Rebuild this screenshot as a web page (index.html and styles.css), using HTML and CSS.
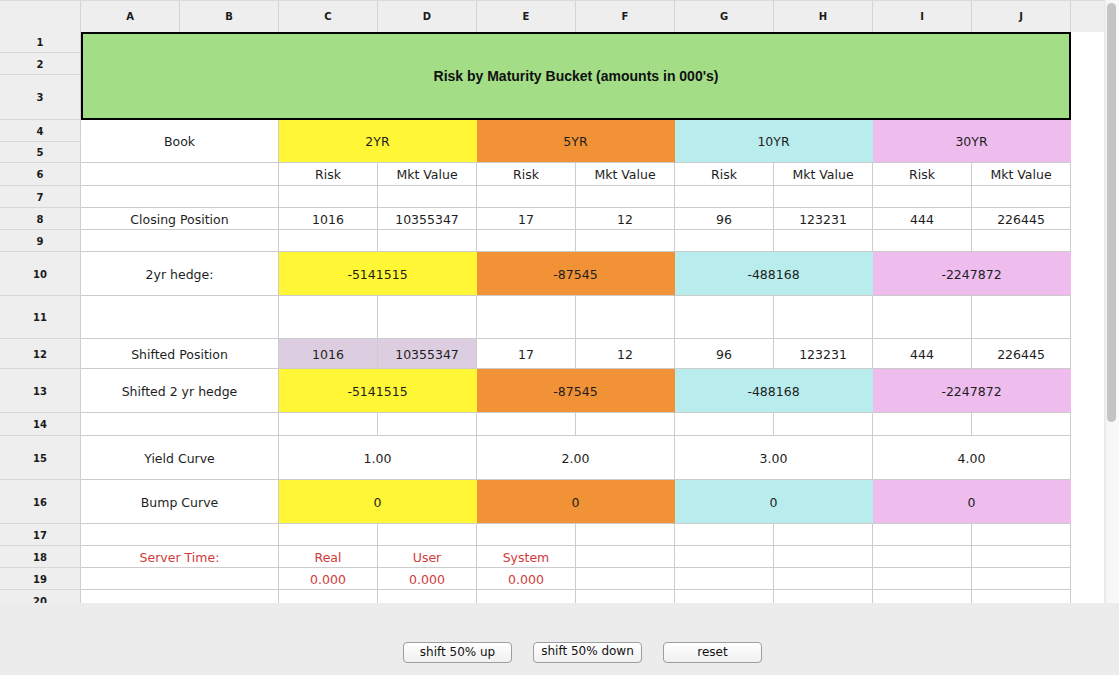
FILE: index.html
```html
<!DOCTYPE html>
<html>
<head>
<meta charset="utf-8">
<title>Risk by Maturity Bucket</title>
<link rel="stylesheet" href="styles.css">
</head>
<body>
<div class="app">
  <div class="sheet">
    <div class="viewport">
      <div class="colheads">
        <div class="corner"></div>
        <div class="ch">A</div><div class="ch">B</div><div class="ch">C</div><div class="ch">D</div><div class="ch">E</div>
        <div class="ch">F</div><div class="ch">G</div><div class="ch">H</div><div class="ch">I</div><div class="ch">J</div>
        <div class="ch-fill"></div>
      </div>

      <div class="band">
        <div class="rhs">
          <div class="rh h21">1</div>
          <div class="rh h22">2</div>
          <div class="rh h45">3</div>
        </div>
        <div class="cell w10 title">Risk by Maturity Bucket (amounts in 000's)</div>
      </div>

      <div class="band">
        <div class="rhs">
          <div class="rh h22">4</div>
          <div class="rh h21">5</div>
        </div>
        <div class="cell w2">Book</div>
        <div class="cell w2 yellow">2YR</div>
        <div class="cell w2 orange">5YR</div>
        <div class="cell w2 cyan">10YR</div>
        <div class="cell w2 pink">30YR</div>
      </div>

      <div class="band h23">
        <div class="rh">6</div>
        <div class="cell w2"></div>
        <div class="cell">Risk</div><div class="cell">Mkt Value</div>
        <div class="cell">Risk</div><div class="cell">Mkt Value</div>
        <div class="cell">Risk</div><div class="cell">Mkt Value</div>
        <div class="cell">Risk</div><div class="cell">Mkt Value</div>
      </div>

      <div class="band h22">
        <div class="rh">7</div>
        <div class="cell w2"></div>
        <div class="cell"></div><div class="cell"></div><div class="cell"></div><div class="cell"></div>
        <div class="cell"></div><div class="cell"></div><div class="cell"></div><div class="cell"></div>
      </div>

      <div class="band h22">
        <div class="rh">8</div>
        <div class="cell w2">Closing Position</div>
        <div class="cell">1016</div><div class="cell">10355347</div>
        <div class="cell">17</div><div class="cell">12</div>
        <div class="cell">96</div><div class="cell">123231</div>
        <div class="cell">444</div><div class="cell">226445</div>
      </div>

      <div class="band h22">
        <div class="rh">9</div>
        <div class="cell w2"></div>
        <div class="cell"></div><div class="cell"></div><div class="cell"></div><div class="cell"></div>
        <div class="cell"></div><div class="cell"></div><div class="cell"></div><div class="cell"></div>
      </div>

      <div class="band h44">
        <div class="rh">10</div>
        <div class="cell w2">2yr hedge:</div>
        <div class="cell w2 yellow">-5141515</div>
        <div class="cell w2 orange">-87545</div>
        <div class="cell w2 cyan">-488168</div>
        <div class="cell w2 pink">-2247872</div>
      </div>

      <div class="band h43">
        <div class="rh">11</div>
        <div class="cell w2"></div>
        <div class="cell"></div><div class="cell"></div><div class="cell"></div><div class="cell"></div>
        <div class="cell"></div><div class="cell"></div><div class="cell"></div><div class="cell"></div>
      </div>

      <div class="band h30">
        <div class="rh">12</div>
        <div class="cell w2">Shifted Position</div>
        <div class="cell lavender">1016</div><div class="cell lavender">10355347</div>
        <div class="cell">17</div><div class="cell">12</div>
        <div class="cell">96</div><div class="cell">123231</div>
        <div class="cell">444</div><div class="cell">226445</div>
      </div>

      <div class="band h44">
        <div class="rh">13</div>
        <div class="cell w2">Shifted 2 yr hedge</div>
        <div class="cell w2 yellow">-5141515</div>
        <div class="cell w2 orange">-87545</div>
        <div class="cell w2 cyan">-488168</div>
        <div class="cell w2 pink">-2247872</div>
      </div>

      <div class="band h23">
        <div class="rh">14</div>
        <div class="cell w2"></div>
        <div class="cell"></div><div class="cell"></div><div class="cell"></div><div class="cell"></div>
        <div class="cell"></div><div class="cell"></div><div class="cell"></div><div class="cell"></div>
      </div>

      <div class="band h44">
        <div class="rh">15</div>
        <div class="cell w2">Yield Curve</div>
        <div class="cell w2">1.00</div>
        <div class="cell w2">2.00</div>
        <div class="cell w2">3.00</div>
        <div class="cell w2">4.00</div>
      </div>

      <div class="band h44">
        <div class="rh">16</div>
        <div class="cell w2">Bump Curve</div>
        <div class="cell w2 yellow">0</div>
        <div class="cell w2 orange">0</div>
        <div class="cell w2 cyan">0</div>
        <div class="cell w2 pink">0</div>
      </div>

      <div class="band h22">
        <div class="rh">17</div>
        <div class="cell w2"></div>
        <div class="cell"></div><div class="cell"></div><div class="cell"></div><div class="cell"></div>
        <div class="cell"></div><div class="cell"></div><div class="cell"></div><div class="cell"></div>
      </div>

      <div class="band h22">
        <div class="rh">18</div>
        <div class="cell w2 red">Server Time:</div>
        <div class="cell red">Real</div><div class="cell red">User</div><div class="cell red">System</div>
        <div class="cell"></div><div class="cell"></div><div class="cell"></div><div class="cell"></div><div class="cell"></div>
      </div>

      <div class="band h22">
        <div class="rh">19</div>
        <div class="cell w2"></div>
        <div class="cell red">0.000</div><div class="cell red">0.000</div><div class="cell red">0.000</div>
        <div class="cell"></div><div class="cell"></div><div class="cell"></div><div class="cell"></div><div class="cell"></div>
      </div>

      <div class="band h22">
        <div class="rh">20</div>
        <div class="cell w2"></div>
        <div class="cell"></div><div class="cell"></div><div class="cell"></div><div class="cell"></div>
        <div class="cell"></div><div class="cell"></div><div class="cell"></div><div class="cell"></div>
      </div>
    </div>
    <div class="scrollbar"><div class="thumb"></div></div>
  </div>

  <div class="controls">
    <button class="btn btn-wide">shift 50% up</button>
    <button class="btn btn-wide btn-raised">shift 50% down</button>
    <button class="btn btn-reset">reset</button>
  </div>
</div>
</body>
</html>
```

FILE: styles.css
```css
html, body {
  margin: 0;
  padding: 0;
}

body {
  width: 1119px;
  height: 675px;
  overflow: hidden;
  font-family: "DejaVu Sans", "Noto Sans", sans-serif;
  background: #ececec;
}

.app {
  display: flex;
  flex-direction: column;
  height: 675px;
}

.sheet {
  display: flex;
  height: 603px;
  flex: none;
  overflow: hidden;
  background: #ffffff;
}

.viewport {
  flex: 1;
  overflow: hidden;
}

.scrollbar {
  width: 15px;
  flex: none;
  box-sizing: border-box;
  padding-top: 3px;
  display: flex;
  justify-content: center;
  background: linear-gradient(to right, #e6e6e6, #f6f6f6 3px, #fafafa);
}

.thumb {
  width: 9px;
  height: 419px;
  border-radius: 5px;
  background: #c4c4c4;
}

/* column headers */
.colheads {
  display: flex;
  height: 32px;
  box-sizing: border-box;
  border-top: 1px solid #dadada;
  background: #eeeeee;
}

.corner {
  width: 81px;
  box-sizing: border-box;
  border-right: 1px solid #d4d4d4;
}

.ch {
  width: 99px;
  box-sizing: border-box;
  border-right: 1px solid #d4d4d4;
  display: flex;
  align-items: center;
  justify-content: center;
  font-size: 10px;
  font-weight: bold;
  color: #1a1a1a;
}

.ch-fill {
  flex: 1;
}

/* bands of rows */
.band {
  display: flex;
  width: 1071px;
}

.rhs {
  display: flex;
  flex-direction: column;
}

.rh {
  width: 81px;
  box-sizing: border-box;
  padding-top: 1px;
  background: #eeeeee;
  border-right: 1px solid #cfcfcf;
  border-bottom: 1px solid #d6d6d6;
  display: flex;
  align-items: center;
  justify-content: center;
  font-size: 10px;
  font-weight: bold;
  color: #1a1a1a;
}

.h21 { height: 21px; }
.h22 { height: 22px; }
.h23 { height: 23px; }
.h30 { height: 30px; }
.h43 { height: 43px; }
.h44 { height: 44px; }
.h45 { height: 45px; }

.cell {
  width: 99px;
  box-sizing: border-box;
  padding-top: 1px;
  border-right: 1px solid #cccccc;
  border-bottom: 1px solid #cccccc;
  display: flex;
  align-items: center;
  justify-content: center;
  font-size: 12.5px;
  color: #1e1e1e;
  white-space: nowrap;
}

.w2 { width: 198px; }
.w10 { width: 990px; }

.title {
  border: 2px solid #000000;
  padding-top: 0;
  background: #a3de87;
  font-family: "Liberation Sans", Arial, sans-serif;
  font-weight: bold;
  font-size: 14px;
  color: #111111;
}

.yellow {
  background: #fff735;
  border-right-color: transparent;
}

.orange {
  background: #f09235;
  border-right-color: transparent;
}

.cyan {
  background: #b9eded;
  border-right-color: transparent;
}

.pink {
  background: #eebdee;
  border-right-color: transparent;
}

.lavender {
  background: #dccde0;
}

.red {
  color: #d23a3a;
}

/* bottom controls */
.controls {
  flex: 1;
  box-sizing: border-box;
  display: flex;
  justify-content: center;
  align-items: flex-start;
  gap: 21px;
  padding-top: 39px;
  padding-left: 46px;
  background: #ececec;
}

.btn {
  height: 21px;
  box-sizing: border-box;
  padding: 0;
  border: 1px solid #9e9e9e;
  border-radius: 4px;
  background: linear-gradient(#ffffff, #f0f0f0);
  font-family: "DejaVu Sans", "Noto Sans", sans-serif;
  font-size: 12px;
  color: #111111;
  line-height: 19px;
}

.btn-wide { width: 109px; }
.btn-reset { width: 99px; }

.btn-raised {
  line-height: 16px;
  padding-bottom: 3px;
}
```
